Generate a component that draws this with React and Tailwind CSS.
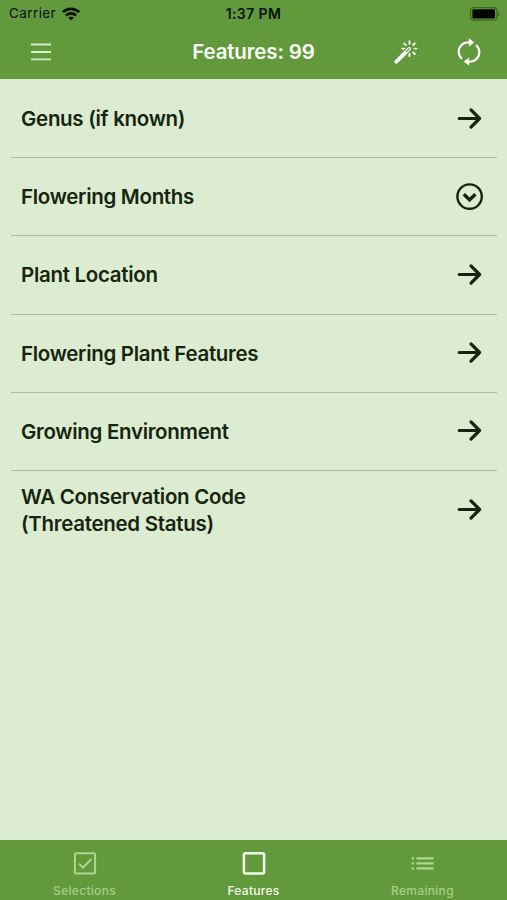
import React from 'react';

const features = [
    { label: 'Genus (if known)', icon: 'arrow' },
    { label: 'Flowering Months', icon: 'expand' },
    { label: 'Plant Location', icon: 'arrow' },
    { label: 'Flowering Plant Features', icon: 'arrow' },
    { label: 'Growing Environment', icon: 'arrow' },
    { label: 'WA Conservation Code (Threatened Status)', icon: 'arrow' },
];

const WifiIcon = () => (
    <svg className="h-[14px] w-[18px]" viewBox="0 0 18 14" fill="none" stroke="#081004" strokeWidth="2.8">
        <path d="M0.9 5.1C5.5 0.7 12.5 0.7 17.1 5.1" />
        <path d="M4 8.5C6.9 5.8 11.1 5.8 14 8.5" />
        <path d="M6.2 10.7C7.9 9.3 10.1 9.3 11.8 10.7L9 13.6Z" fill="#081004" stroke="none" />
    </svg>
);

const BatteryIcon = () => (
    <svg className="h-[14px] w-[30px]" viewBox="0 0 30 14">
        <rect x="0.6" y="0.6" width="26.2" height="12.6" rx="3.4" fill="none" stroke="#3c6520" strokeWidth="1.2" />
        <rect x="2.4" y="2.2" width="22.6" height="9.4" rx="1.4" fill="#020401" />
        <path d="M28 4.6C30 5.3 30 8.5 28 9.2Z" fill="#3c6520" />
    </svg>
);

const MenuIcon = () => (
    <svg className="h-[18px] w-5" viewBox="0 0 20 18" stroke="#d6ecc6" strokeWidth="1.8">
        <path d="M0 1.5H20M0 9H20M0 16.4H20" />
    </svg>
);

const WandIcon = () => (
    <svg className="h-6 w-6" viewBox="0 0 24 24" fill="none" stroke="#fff" strokeLinecap="round">
        <path d="M2.4 21.6L11.2 12.8" strokeWidth="4" />
        <path d="M11.7 12.3L15.2 8.8" strokeWidth="3.6" />
        <path d="M12.4 11.6L15.2 8.8" stroke="#63993d" strokeWidth="1.3" />
        <path d="M15.5 1.3V3.8M15.5 13.8V16.3M20.5 8.6H22.6M8.3 8.6H10.4M10.1 3.4L11.7 5M19.2 12.4L20.8 14M20.8 3.4L19.2 5" strokeWidth="1.9" />
    </svg>
);

const RefreshIcon = () => (
    <svg className="h-7 w-6" viewBox="0 0 24 28" fill="none" stroke="#fff" strokeWidth="2.2">
        <path d="M5 21C0.7 17 0.7 11 4.2 7.2C6.4 4.9 9 4 13 4.3" />
        <path d="M19 7C23.3 11 23.3 17 19.8 20.8C17.6 23.1 15 24 11 23.7" />
        <path d="M11.8 0.2V8.4L17.4 4.4Z" fill="#fff" stroke="none" />
        <path d="M12.2 27.8V19.6L6.6 23.6Z" fill="#fff" stroke="none" />
    </svg>
);

const ArrowIcon = () => (
    <svg className="h-7 w-7" viewBox="0 0 28 28" fill="none" stroke="#17240f" strokeWidth="3.2" strokeLinecap="round" strokeLinejoin="round">
        <path d="M3.2 13.5H23.6M15 4.9L23.6 13.5L15 22.1" />
    </svg>
);

const ExpandIcon = () => (
    <svg className="h-7 w-7" viewBox="0 0 28 28" fill="none" stroke="#17240f">
        <circle cx="13.6" cy="13.6" r="12.2" strokeWidth="2.4" />
        <path d="M7.8 11.2L13.6 16.8L19.4 11.2" strokeWidth="3.4" />
    </svg>
);

const CheckedIcon = () => (
    <svg className="h-6 w-6" viewBox="0 0 24 24" fill="none" stroke="#acd691" strokeWidth="2">
        <rect x="1.9" y="2.2" width="20.2" height="20.2" rx="1.5" />
        <path d="M6 12.6L10 16.6L18.3 8" />
    </svg>
);

const SquareIcon = () => (
    <svg className="h-6 w-6" viewBox="0 0 24 24" fill="none" stroke="#f3ffeb" strokeWidth="2.5">
        <rect x="1.9" y="2.2" width="20.2" height="20.2" rx="1.5" />
    </svg>
);

const ListIcon = () => (
    <svg className="h-6 w-6" viewBox="0 0 24 24" fill="none" stroke="#acd691" strokeWidth="2.2">
        <path d="M0.6 7.3H3M0.6 12.3H3M0.6 17.3H3M5.4 7.3H22.6M5.4 12.3H22.6M5.4 17.3H22.6" />
    </svg>
);

const tabs = [
    { label: 'Selections', Icon: CheckedIcon, active: false },
    { label: 'Features', Icon: SquareIcon, active: true },
    { label: 'Remaining', Icon: ListIcon, active: false },
];

const Header = () => (
    <header className="h-[79px] shrink-0 bg-[#63993d]">
        <div className="grid h-[27px] grid-cols-3 items-center px-[7px] text-[13.5px] text-[#081004]">
            <div className="flex items-center gap-[6px] pl-[2px]">
                <span className="tracking-[0.4px]">Carrier</span>
                <WifiIcon />
            </div>
            <span className="text-center text-[14px] font-semibold tracking-[0.4px]">1:37 PM</span>
            <div className="flex justify-end">
                <BatteryIcon />
            </div>
        </div>
        <div className="grid h-[50px] grid-cols-3 items-center px-[26px]">
            <div className="pl-[5px]">
                <MenuIcon />
            </div>
            <h1 className="whitespace-nowrap pt-px text-center text-[20.5px] font-semibold tracking-[-0.15px] text-[#f8fff3]">Features: 99</h1>
            <div className="flex items-center justify-end gap-[39px]">
                <WandIcon />
                <RefreshIcon />
            </div>
        </div>
    </header>
);

const FeatureRow = ({ label, icon }) => (
    <li className="flex h-[78.2px] items-center justify-between border-b border-[#abbca2] pl-[10px] pr-[13px] last:border-b-0">
        <span className="max-w-[250px] text-[20.5px] font-semibold leading-[27px] tracking-[-0.3px]">{label}</span>
        {icon === 'expand' ? <ExpandIcon /> : <ArrowIcon />}
    </li>
);

const App = () => {
    return (
        <div className="flex h-[900px] w-[507px] flex-col overflow-hidden bg-[#dcecd1] font-['Inter',sans-serif] text-[#17240f]">
            <Header />
            <main className="flex-1 pt-px">
                <ul className="ml-[11px] mr-[10px]">
                    {features.map(f => (
                        <FeatureRow key={f.label} label={f.label} icon={f.icon} />
                    ))}
                </ul>
            </main>
            <nav className="grid h-[60px] shrink-0 grid-cols-3 bg-[#63993d]">
                {tabs.map(({ label, Icon, active }) => (
                    <div key={label} className={`flex flex-col items-center gap-[8px] pt-[11px] ${active ? 'text-[#f3ffeb]' : 'text-[#a3cf86]'}`}>
                        <Icon />
                        <span className="text-[12px] font-medium leading-4 tracking-[0.3px]">{label}</span>
                    </div>
                ))}
            </nav>
        </div>
    );
};

export default App;
